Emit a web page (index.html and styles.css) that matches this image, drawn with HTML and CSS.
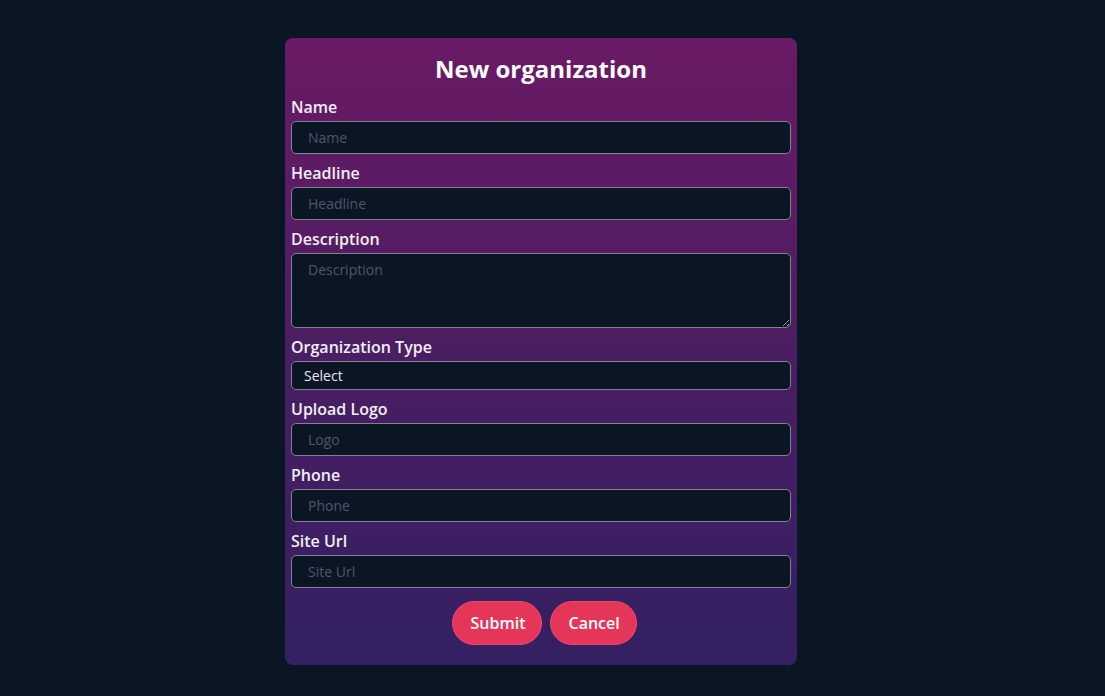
FILE: index.html
```html
<!DOCTYPE html>
<html>
<head>
<meta charset="utf-8">
<link rel="stylesheet" href="styles.css">
</head>
<body>
<main class="page">
  <form class="card">
    <h1 class="title">New organization</h1>
    <label class="label">Name</label>
    <input class="field" type="text" placeholder="Name">
    <label class="label">Headline</label>
    <input class="field" type="text" placeholder="Headline">
    <label class="label">Description</label>
    <textarea class="field area" placeholder="Description"></textarea>
    <label class="label">Organization Type</label>
    <div class="select">Select</div>
    <label class="label">Upload Logo</label>
    <input class="field" type="text" placeholder="Logo">
    <label class="label">Phone</label>
    <input class="field" type="text" placeholder="Phone">
    <label class="label">Site Url</label>
    <input class="field" type="text" placeholder="Site Url">
    <div class="actions">
      <button type="button" class="btn submit">Submit</button>
      <button type="button" class="btn cancel">Cancel</button>
    </div>
  </form>
</main>
</body>
</html>
```
FILE: styles.css
```css
* { box-sizing: border-box; }
html, body { margin: 0; padding: 0; }
body {
  background: #0b1625;
  font-family: "Open Sans", "Noto Sans", sans-serif;
  color: #fff;
  height: 696px;
}
.page {
  display: flex;
  justify-content: center;
  padding-top: 38px;
  padding-right: 23px;
}
.card {
  width: 512px;
  height: 627px;
  border-radius: 8px;
  background: linear-gradient(180deg, #6a1a64 0%, #4a1e62 50%, #332062 100%);
  padding: 15px 6px 20px;
  display: flex;
  flex-direction: column;
}
.title {
  margin: 0 0 11px;
  font-size: 24px;
  line-height: 32px;
  font-weight: 700;
  text-align: center;
  color: #fff;
}
.label {
  display: block;
  font-size: 16px;
  line-height: 22px;
  font-weight: 600;
  color: #f2eef4;
  margin-bottom: 3px;
}
.field {
  display: block;
  width: 100%;
  height: 33px;
  margin: 0 0 8px;
  background: #0b1625;
  border: 1px solid #85828f;
  border-radius: 5px;
  padding: 0 16px;
  font-family: "Open Sans", sans-serif;
  font-size: 14px;
  color: #dfe3ea;
  outline: none;
}
.field::placeholder { color: #4d5868; }
.area {
  height: 75px;
  padding-top: 6px;
  resize: vertical;
  line-height: 20px;
}
.select {
  height: 29px;
  margin-bottom: 8px;
  background: #0b1625;
  border: 1px solid #85828f;
  border-radius: 5px;
  padding: 0 12px;
  font-size: 14px;
  line-height: 27px;
  color: #e7e9ee;
}
.actions {
  display: flex;
  justify-content: center;
  gap: 8px;
  margin-top: 5px;
  padding-left: 6px;
}
.btn {
  height: 44px;
  border: 1px solid #ea4a69;
  border-radius: 22px;
  background: #e5365a;
  color: #fff;
  font-family: "Open Sans", sans-serif;
  font-size: 16px;
  font-weight: 600;
  padding: 0 18px;
  cursor: pointer;
}
.submit { width: 90px; }
.cancel { width: 87px; }
```
